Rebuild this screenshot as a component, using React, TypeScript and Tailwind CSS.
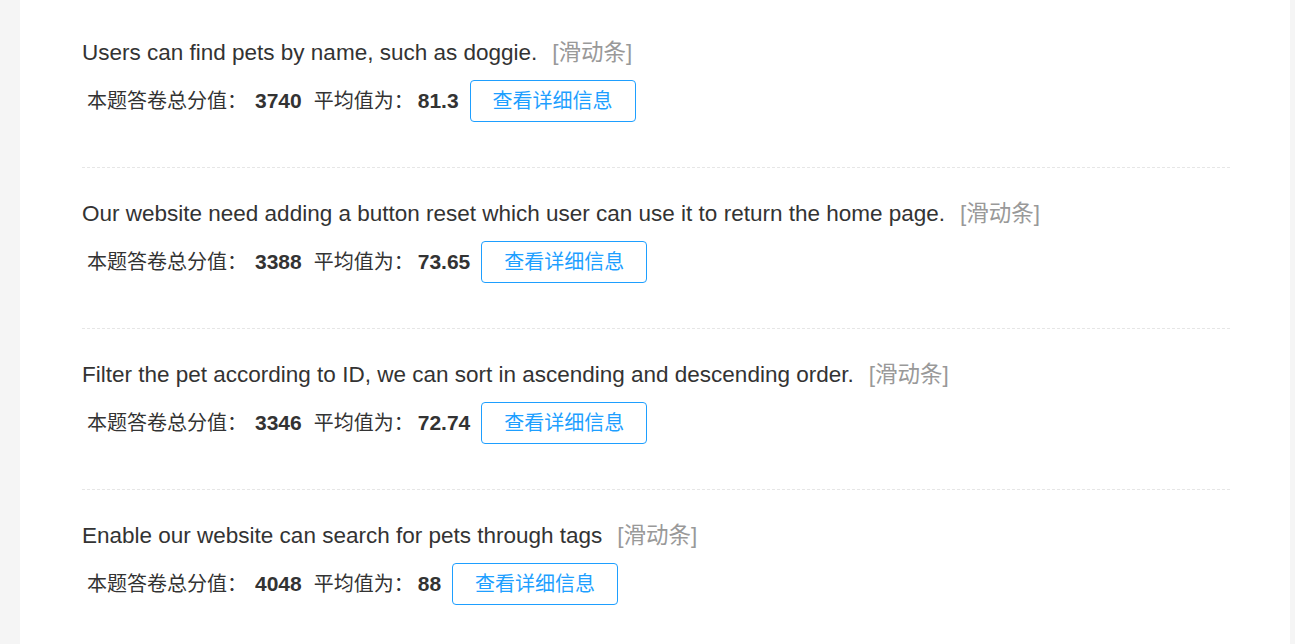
import React from 'react';

type Item = {
  title: string;
  total: number;
  avg: string;
};

const items: Item[] = [
  { title: 'Users can find pets by name, such as doggie.', total: 3740, avg: '81.3' },
  { title: 'Our website need adding a button reset which user can use it to return the home page.', total: 3388, avg: '73.65' },
  { title: 'Filter the pet according to ID, we can sort in ascending and descending order.', total: 3346, avg: '72.74' },
  { title: 'Enable our website can search for pets through tags', total: 4048, avg: '88' },
];

const font = { fontFamily: '"Liberation Sans", Arial, "Noto Sans CJK SC", sans-serif' };

const QuestionItem: React.FC<{ item: Item }> = ({ item }) => (
  <div className="pt-[31px] pb-[45px] border-b border-dashed border-[#e6e6e6]">
    <div className="h-[30px] flex items-center text-[22.5px] text-[#333] whitespace-nowrap">
      <span>{item.title}</span>
      <span className="ml-[15px] text-[#999]">[滑动条]</span>
    </div>
    <div className="mt-[12px] h-[42px] flex items-center pl-[5px] text-[20px] text-[#333] whitespace-nowrap">
      <span>本题答卷总分值：</span>
      <b className="ml-[8px] font-bold text-[21px]">{item.total}</b>
      <span className="ml-[12px]">平均值为：</span>
      <b className="ml-[4px] font-bold text-[21px]">{item.avg}</b>
      <button className="ml-[11px] h-[42px] px-[22px] border border-[#1e9fff] rounded-[4px] bg-white text-[#1e9fff] text-[20px]">
        查看详细信息
      </button>
    </div>
  </div>
);

const App: React.FC = () => {
  return (
    <div className="min-h-screen bg-[#f5f5f5] pl-[20px] pr-[5px]" style={font}>
      <div className="min-h-screen bg-white pl-[62px] pr-[60px] pt-[7px]">
        {items.map((item, i) => (
          <QuestionItem key={i} item={item} />
        ))}
      </div>
    </div>
  );
};

export default App;
